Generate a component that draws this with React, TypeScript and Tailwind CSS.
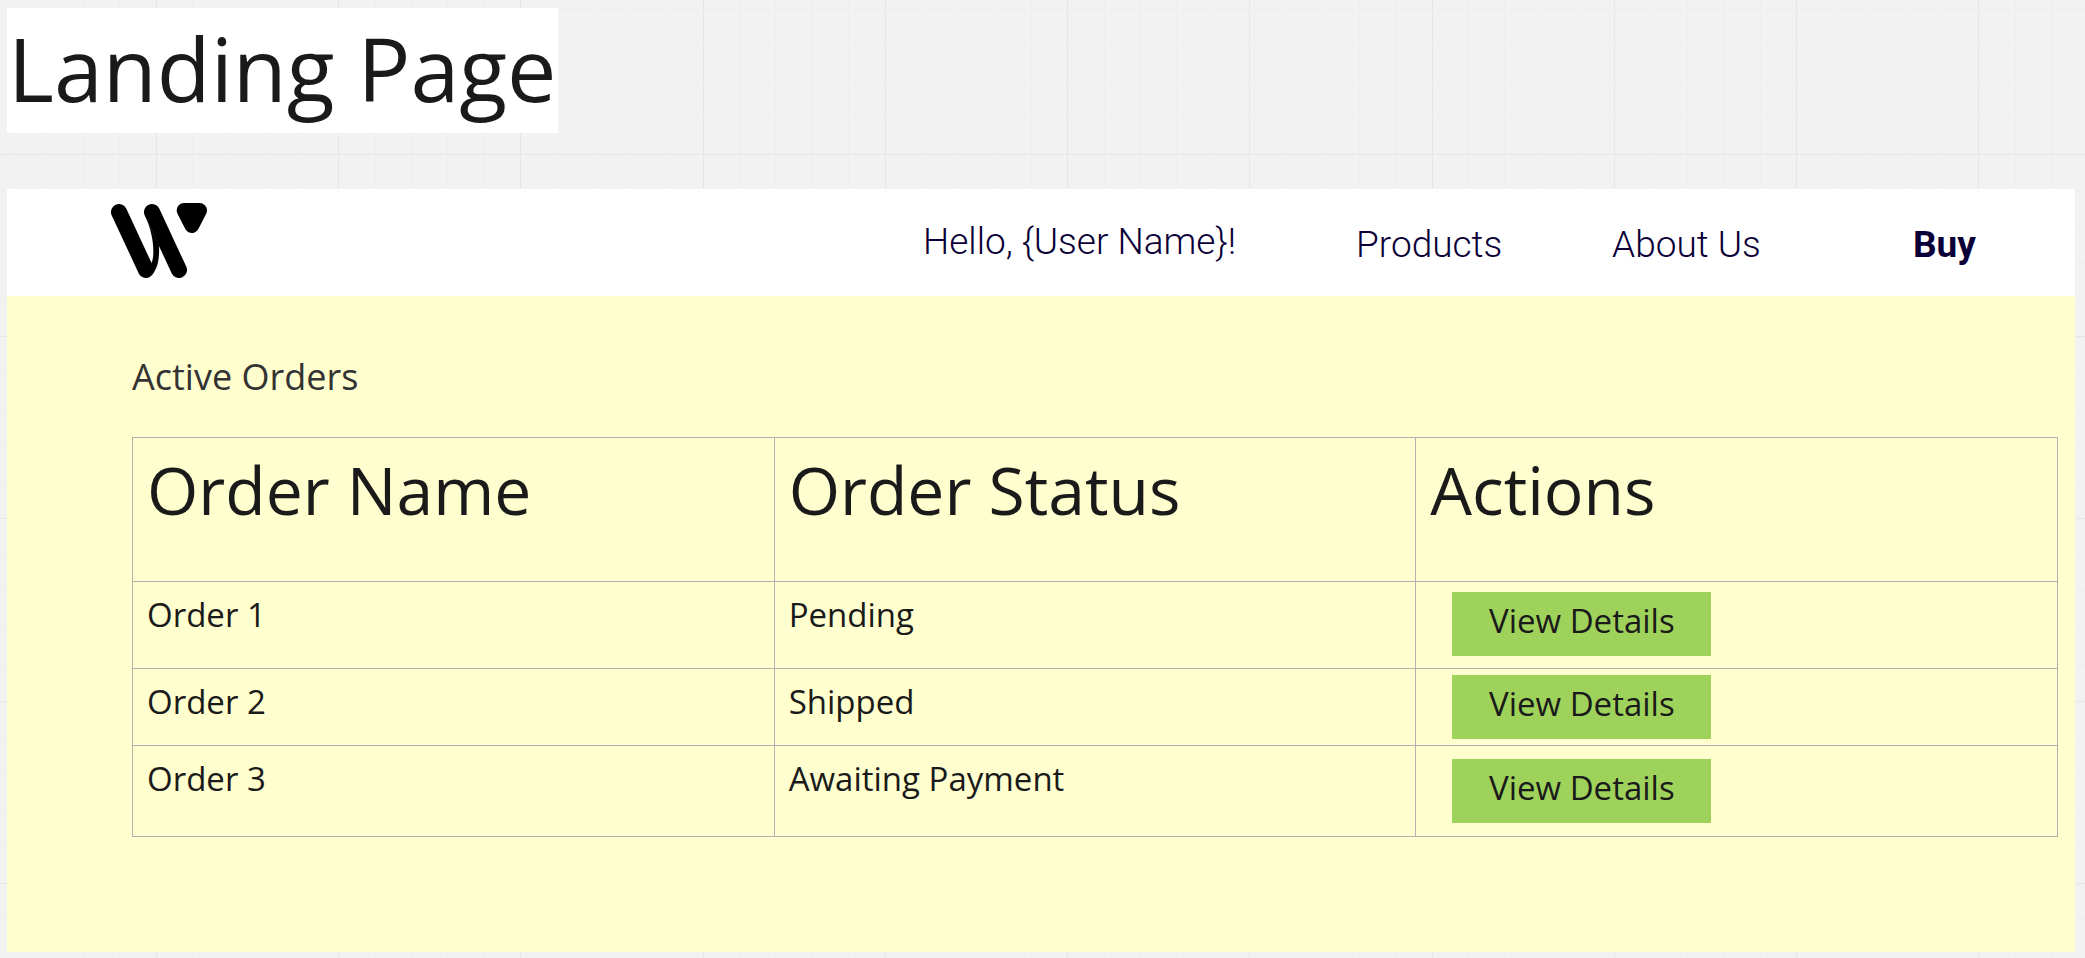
import React from "react";

type Order = {
  name: string;
  status: string;
  rowClass: string;
  actionClass: string;
};

const orders: Order[] = [
  { name: "Order 1", status: "Pending", rowClass: "h-[87px]", actionClass: "pt-[10px]" },
  { name: "Order 2", status: "Shipped", rowClass: "h-[77px]", actionClass: "pt-[6px]" },
  { name: "Order 3", status: "Awaiting Payment", rowClass: "h-[91px]", actionClass: "pt-[13px]" },
];

const GRID_STEP = 36.45;
const gridLines = Array.from({ length: 120 }, (_, i) => i);

function CanvasGrid() {
  return (
    <svg aria-hidden="true" className="absolute inset-0 h-full w-full">
      {gridLines.map((i) => (
        <rect
          key={`v${i}`}
          x={Math.round(10 + i * GRID_STEP)}
          y={0}
          width={1}
          height="100%"
          fill={i % 5 === 4 ? "#e6e6e6" : "#eeeeee"}
        />
      ))}
      {gridLines.map((i) => (
        <rect
          key={`h${i}`}
          x={0}
          y={Math.round(8 + i * GRID_STEP)}
          width="100%"
          height={1}
          fill={i % 5 === 4 ? "#e6e6e6" : "#eeeeee"}
        />
      ))}
    </svg>
  );
}

function Logo() {
  return (
    <svg viewBox="63 69 288 225" className="h-[75px] w-[96px]" role="img" aria-label="W">
      <g stroke="#000" strokeLinecap="round" strokeLinejoin="round">
        <path d="M87 96 168 270M186 96 267 270" strokeWidth="48" fill="none" />
        <path d="M282 91H329L305.500 137Z" strokeWidth="44" />
      </g>
      <path d="M164 106C181 140 190 180 190 212C190 232 188 243 184 249L189 281C202 264 209 240 207 196Z" />
    </svg>
  );
}

export default function App() {
  return (
    <div className="relative min-h-screen bg-[#f2f2f2] font-['Open_Sans',sans-serif] text-[#1a1a1a]">
      <CanvasGrid />
      <div className="relative pt-2 pr-[10px] pb-[6px] pl-[7px]">
        <h1 className="w-fit bg-white px-px pb-[5px] text-[88px] leading-[120px] whitespace-nowrap">
          Landing Page
        </h1>

        <main className="mt-14 bg-[#fffece] pb-[115px]">
          <header className="flex h-[107px] items-center bg-white pl-[104px] font-[Roboto,sans-serif] text-[37px] leading-[48px] font-light whitespace-nowrap text-[#0a0037]">
            <a href="#home" aria-label="Home" className="pb-1">
              <Logo />
            </a>
            <nav className="ml-auto flex items-center pt-1">
              <span className="w-[433px] pb-[6px]">Hello, {"{User Name}"}!</span>
              <a href="#products" className="w-[256px]">Products</a>
              <a href="#about" className="w-[301px]">About Us</a>
              <a href="#buy" className="w-[162px] font-bold">Buy</a>
            </nav>
          </header>

          <section className="pr-[17px] pl-[125px]">
            <h2 className="pt-[55px] pb-[34px] text-[36px] leading-[52px] text-[#333333]">
              Active Orders
            </h2>
            <table className="w-full table-fixed border-collapse text-left align-top text-[33px] leading-[48px]">
              <thead>
                <tr className="h-[144px] align-top text-[66px] leading-[90px]">
                  {["Order Name", "Order Status", "Actions"].map((label) => (
                    <th key={label} scope="col" className="border border-[#b1b1b1] pt-[6px] pl-[14px] font-normal">
                      {label}
                    </th>
                  ))}
                </tr>
              </thead>
              <tbody>
                {orders.map((order) => (
                  <tr key={order.name} className={`${order.rowClass} align-top`}>
                    <td className="border border-[#b1b1b1] pt-[9px] pl-[14px]">{order.name}</td>
                    <td className="border border-[#b1b1b1] pt-[9px] pl-[14px]">{order.status}</td>
                    <td className={`border border-[#b1b1b1] pl-[36px] ${order.actionClass}`}>
                      <button type="button" className="block h-16 w-[259px] bg-[#9ed25a] pb-[6px]">
                        View Details
                      </button>
                    </td>
                  </tr>
                ))}
              </tbody>
            </table>
          </section>
        </main>
      </div>
    </div>
  );
}
